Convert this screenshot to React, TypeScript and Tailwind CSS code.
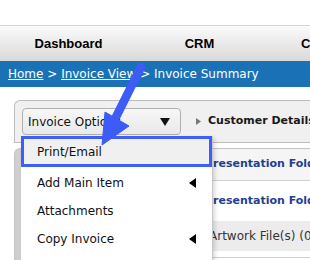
import React from "react";

const sans = { fontFamily: '"DejaVu Sans", Verdana, sans-serif' };

export default function App() {
  return (
    <div className="relative w-[310px] h-[260px] overflow-hidden bg-white" style={sans}>
      {/* top white */}
      <div className="h-[25px] bg-white" />
      {/* nav */}
      <div
        className="h-[36px] border-t border-[#d2d2d2] bg-gradient-to-b from-[#fbfbfb] to-[#d9d9d9] flex items-center pl-[3px] whitespace-nowrap"
        style={{ fontFamily: '"Liberation Sans", Arial, sans-serif' }}
      >
        <div className="w-[131px] shrink-0 text-center text-[13px] font-bold text-black">Dashboard</div>
        <div className="w-[131px] shrink-0 text-center text-[13px] font-bold text-black">CRM</div>
        <div className="w-[131px] shrink-0 text-center text-[13px] font-bold text-black">Company</div>
      </div>
      {/* breadcrumb */}
      <div className="h-[26px] bg-[#1b71b6] flex items-center pl-[8px] text-[12px] text-white whitespace-nowrap">
        <span className="underline">Home</span>
        <span>&nbsp;&gt;&nbsp;</span>
        <span className="underline">Invoice View</span>
        <span>&nbsp;&gt; Invoice Summary</span>
      </div>
      {/* content */}
      <div className="pl-[14px] pt-[13px]">
        <div className="h-[43px] border border-r-0 border-[#bdbdbd] rounded-tl-[6px] bg-[#f0f0f0] flex items-center pl-[7px] whitespace-nowrap">
          <div className="w-[159px] h-[27px] shrink-0 border border-[#b0b0b0] rounded-[4px] bg-gradient-to-b from-[#f7f7f7] to-[#e9e9e9] flex items-center justify-between pl-[5px] pr-[10px]">
            <span className="text-[12px] text-[#111]">Invoice Options</span>
            <svg width="10" height="8" viewBox="0 0 10 8"><path d="M0 0 H10 L5 8 Z" fill="#111" /></svg>
          </div>
          <div className="ml-[15px] flex items-center gap-[7px]">
            <svg width="5" height="7" viewBox="0 0 5 7"><path d="M0 0 L5 3.5 L0 7 Z" fill="#777" /></svg>
            <span className="text-[11px] font-bold text-[#1a1a1a]">Customer Details</span>
          </div>
        </div>
        <div className="mt-[5px] border border-r-0 border-b-0 border-[#c4c4c4] rounded-tl-[6px] bg-gradient-to-r from-[#cfcfcf] to-[#e2e2e2] h-[120px] flex">
          <div className="w-[176px] shrink-0" />
          <div className="flex-1 flex flex-col whitespace-nowrap bg-white overflow-hidden">
            <div className="h-[32px] shrink-0 bg-[#f5f5f5] border-b border-[#cfcfcf] flex items-center pl-[14px] text-[11px] font-bold text-[#1f3f91]">Presentation Folder</div>
            <div className="h-[40px] shrink-0 bg-white flex items-center pl-[14px] text-[11px] font-bold text-[#1f3f91]">Presentation Folder</div>
            <div className="h-[30px] shrink-0 bg-[#ececec] flex items-center pl-[18px] text-[12px] text-[#333]">Artwork File(s) (0)</div>
            <div className="h-[7px] shrink-0 bg-white border-b border-[#d0d0d0]" />
          </div>
        </div>
      </div>

      {/* dropdown menu overlay */}
      <div className="absolute left-[21px] top-[136px] w-[192px] h-[130px] bg-white border-r border-[#c8c8c8] shadow-[2px_2px_4px_rgba(0,0,0,0.15)] text-[12px] text-[#111] whitespace-nowrap">
        <div className="h-[31px] border-[3px] border-[#3f5df8] bg-[#f0f0f0] flex items-center pl-[13px]">Print/Email</div>
        <div className="pt-[2px]">
          <div className="h-[28px] flex items-center justify-between pl-[16px] pr-[16px]">
            <span>Add Main Item</span>
            <svg width="7" height="10" viewBox="0 0 7 10"><path d="M7 0 V10 L0 5 Z" fill="#000" /></svg>
          </div>
          <div className="h-[28px] flex items-center pl-[16px]">Attachments</div>
          <div className="h-[28px] flex items-center justify-between pl-[16px] pr-[16px]">
            <span>Copy Invoice</span>
            <svg width="7" height="10" viewBox="0 0 7 10"><path d="M7 0 V10 L0 5 Z" fill="#000" /></svg>
          </div>
        </div>
      </div>

      {/* annotation arrow */}
      <svg className="absolute left-0 top-0 pointer-events-none" width="310" height="260" viewBox="0 0 310 260">
        <line x1="141" y1="67" x2="116" y2="117" stroke="#3d5bf6" strokeWidth="8.5" strokeLinecap="round" />
        <path d="M105 112 L129 126 L102 145 Z" fill="#3d5bf6" stroke="#3d5bf6" strokeWidth="1" strokeLinejoin="round" />
      </svg>
    </div>
  );
}
